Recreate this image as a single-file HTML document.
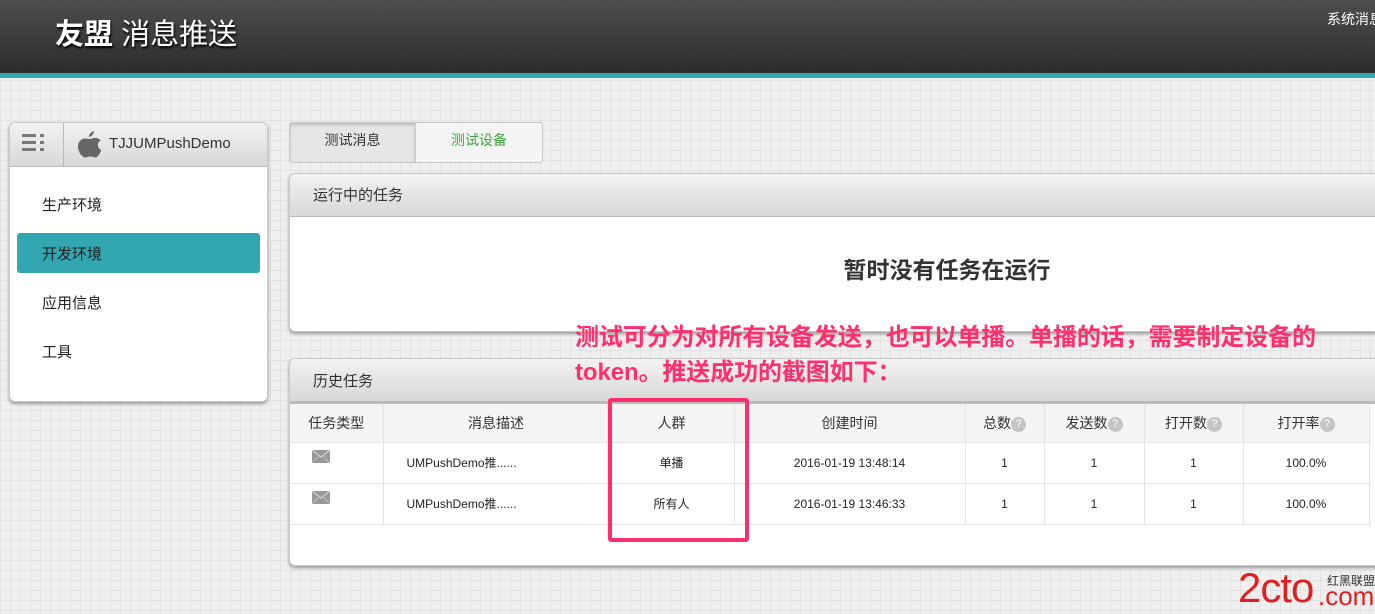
<!DOCTYPE html><html><head><meta charset="utf-8"><style>
*{margin:0;padding:0;box-sizing:border-box}
body{width:1375px;height:614px;overflow:hidden;position:relative;font-family:"Liberation Sans","Noto Sans CJK SC",sans-serif;background-color:#efefef;background-image:linear-gradient(#e2e2e2 1px,transparent 1px),linear-gradient(90deg,#e2e2e2 1px,transparent 1px);background-size:10px 10px;color:#333}
.a{position:absolute}
.hdr{left:0;top:0;width:1375px;height:73px;background:repeating-linear-gradient(135deg,#444 0 2px,#3c3c3c 2px 4px);background-color:#3a3a3a}
.hdr:after{content:"";position:absolute;left:0;right:0;top:0;bottom:0;background:linear-gradient(#555a,#222a)}
.stripe{left:0;top:73px;width:1375px;height:5px;background:#33a7b1}
.box{background:#fff;border:1px solid #c8c8c8;border-radius:6px;box-shadow:0 2px 3px #999}
.ph{background:linear-gradient(#f2f2f2,#d8d8d8);border-bottom:1px solid #bbb;font-size:15px;color:#333;padding-left:23px}
td{font-size:12px;text-align:center;border-right:1px solid #e4e4e4;border-bottom:1px solid #e4e4e4;color:#222}
th{font-size:14px;font-weight:normal;background:#f4f4f4;border-right:1px solid #e4e4e4;border-bottom:1px solid #e4e4e4;color:#333;height:38px}
.q{display:inline-block;width:15px;height:15px;border-radius:50%;background:#c4c4c4;color:#fff;font-size:11px;line-height:15px;vertical-align:middle}
.env{font-size:15px;color:#222;left:32px}
</style></head><body>
<div class="a hdr"></div>
<div class="a" style="left:55px;top:11px;font-size:29px;color:#fff;text-shadow:1px 2px 2px #000;z-index:2"><b>友盟</b> 消息推送</div>
<div class="a" style="left:1327px;top:9px;font-size:14px;color:#fff;z-index:2;white-space:nowrap">系统消息</div>
<div class="a stripe"></div>

<div class="a box" style="left:9px;top:122px;width:259px;height:280px;overflow:hidden">
 <div class="ph" style="height:44px;padding:0;position:relative">
  <div class="a" style="left:0;top:0;width:54px;height:43px;border-right:1px solid #bbb"></div>
  <div class="a" style="left:12px;top:11px;width:22px;height:3px;background:#777;box-shadow:0 7px #777,0 14px #777"></div>
  <div class="a" style="left:26px;top:11px;width:4px;height:3px;background:#eee;box-shadow:0 7px #eee,0 14px #eee"></div>
  <svg class="a" style="left:68px;top:8px" width="24" height="28" viewBox="0 0 24 28"><path d="M16 0c0 3-2 5-5 6 0-3 2-5 5-6zM12 8c2 0 4-1.5 6-1 2 .2 3.5 1 4.5 2.5-4 2.5-3 8 .8 9.5-1 3-3.5 7.5-6 7.5-2 0-2.5-1-5-1s-3 1-5 1C4 26.5 0 21 0 15.5 0 10 4 7.5 7 7.5c2 0 3.5 .5 5 .5z" fill="#666"/></svg>
  <div class="a" style="left:99px;top:12px;font-size:15px;color:#333">TJJUMPushDemo</div>
 </div>
 <div class="a env" style="top:71px">生产环境</div>
 <div class="a" style="left:7px;top:110px;width:243px;height:40px;background:#33a7b1;border-radius:3px"></div>
 <div class="a env" style="top:120px;color:#222">开发环境</div>
 <div class="a env" style="top:169px">应用信息</div>
 <div class="a env" style="top:218px">工具</div>
</div>

<div class="a" style="left:289px;top:122px;width:254px;height:41px;border:1px solid #c8c8c8;border-radius:3px;background:#f4f4f4;overflow:hidden">
 <div class="a" style="left:0;top:0;width:126px;height:39px;background:#e6e6e6;border-right:1px solid #ccc;box-shadow:inset 0 2px 3px #bbb;text-align:center;line-height:34px;font-size:14px;color:#333">测试消息</div>
 <div class="a" style="left:126px;top:0;width:126px;height:39px;text-align:center;line-height:34px;font-size:14px;color:#3aa83a">测试设备</div>
</div>

<div class="a box" style="left:289px;top:173px;width:1100px;height:159px;overflow:hidden">
 <div class="ph" style="height:43px;line-height:43px">运行中的任务</div>
 <div class="a" style="left:0;width:1314px;top:77px;text-align:center;font-size:23px;font-weight:bold;color:#333">暂时没有任务在运行</div>
</div>

<div class="a box" style="left:289px;top:358px;width:1100px;height:208px;overflow:hidden">
 <div class="ph" style="height:45px;line-height:45px;border-bottom:3px solid #bbb">历史任务</div>
 <table style="border-collapse:collapse;width:1080px;table-layout:fixed">
  <tr><th style="width:93px">任务类型</th><th style="width:226px">消息描述</th><th style="width:125px">人群</th><th style="width:231px">创建时间</th><th style="width:79px">总数<span class="q">?</span></th><th style="width:100px">发送数<span class="q">?</span></th><th style="width:99px">打开数<span class="q">?</span></th><th style="width:126px">打开率<span class="q">?</span></th><th></th></tr>
  <tr style="height:41px"><td style="text-align:left;padding-left:22px"><svg width="18" height="13" style="vertical-align:top;margin-top:-6px"><rect width="18" height="13" fill="#999"/><path d="M0 0L9 7 18 0" stroke="#ddd" fill="none"/><path d="M0 13L7 6M18 13L11 6" stroke="#bbb"/></svg></td><td style="text-align:left;padding-left:23px">UMPushDemo推......</td><td>单播</td><td>2016-01-19 13:48:14</td><td>1</td><td>1</td><td>1</td><td>100.0%</td><td></td></tr>
  <tr style="height:41px"><td style="text-align:left;padding-left:22px"><svg width="18" height="13" style="vertical-align:top;margin-top:-6px"><rect width="18" height="13" fill="#999"/><path d="M0 0L9 7 18 0" stroke="#ddd" fill="none"/><path d="M0 13L7 6M18 13L11 6" stroke="#bbb"/></svg></td><td style="text-align:left;padding-left:23px">UMPushDemo推......</td><td>所有人</td><td>2016-01-19 13:46:33</td><td>1</td><td>1</td><td>1</td><td>100.0%</td><td></td></tr>
 </table>
</div>

<div class="a" style="left:608px;top:398px;width:141px;height:144px;border:4px solid #ff2f6e;border-radius:3px"></div>
<div class="a" style="left:575px;top:320px;font-size:24px;font-weight:bold;color:#ff2f6e;line-height:35px;white-space:nowrap;letter-spacing:-0.1px">测试可分为对所有设备发送，也可以单播。单播的话，需要制定设备的<br>token。推送成功的截图如下：</div>

<div class="a" style="left:1238px;top:568px;font-size:42px;color:#e02020;line-height:40px;white-space:nowrap;letter-spacing:-1px">2cto</div>
<div class="a" style="left:1318px;top:585px;font-size:26px;color:#e02020;line-height:22px">.com</div>
<div class="a" style="left:1327px;top:572px;font-size:12px;color:#333">红黑联盟</div>
</body></html>
